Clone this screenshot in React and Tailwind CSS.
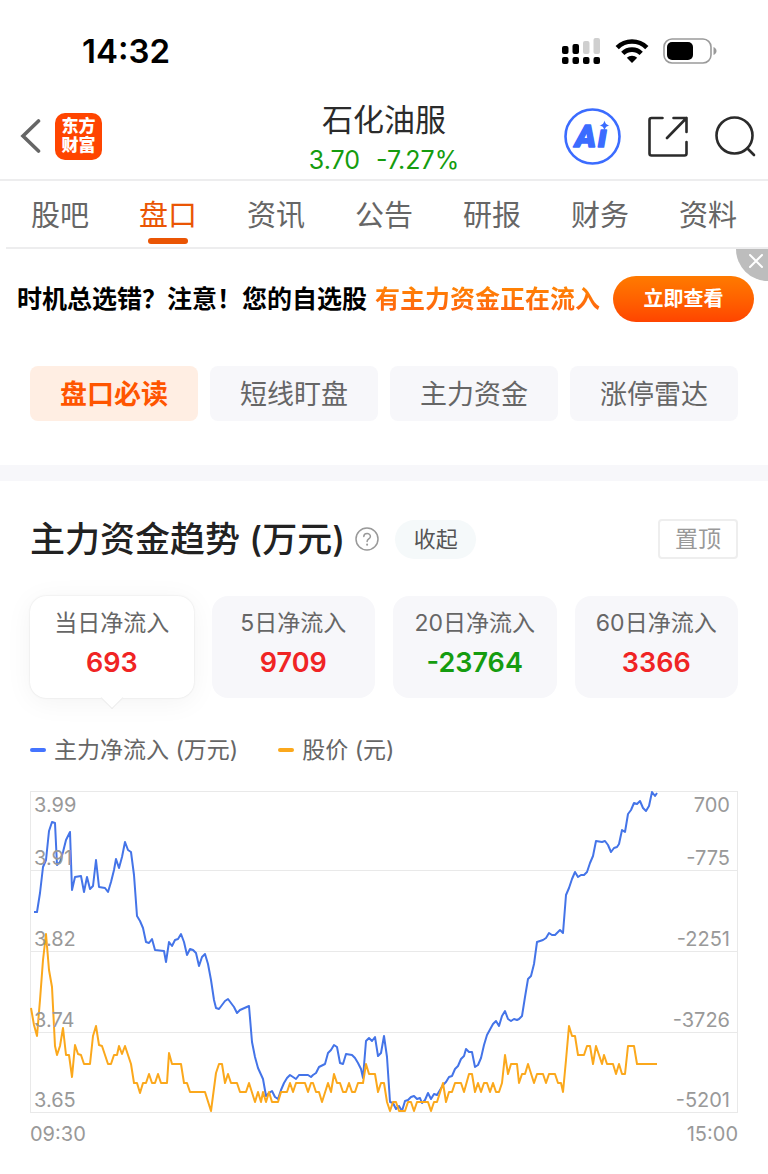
import { useState } from "react";
import clsx from "clsx";

const TABS = ["股吧", "盘口", "资讯", "公告", "研报", "财务", "资料"];

const FILTERS = ["盘口必读", "短线盯盘", "主力资金", "涨停雷达"];

const FLOWS = [
  { label: "当日净流入", value: 693 },
  { label: "5日净流入", value: 9709 },
  { label: "20日净流入", value: -23764 },
  { label: "60日净流入", value: 3366 },
];

const AXIS = [
  { y: 21, price: "3.99", flow: "700" },
  { y: 74, price: "3.91", flow: "-775" },
  { y: 155, price: "3.82", flow: "-2251" },
  { y: 236, price: "3.74", flow: "-3726" },
  { y: 316, price: "3.65", flow: "-5201" },
];

const FLOW_LINE =
  "4,121 7,121 10,102 13,76 16,69 19,40 22,31 25,32 27,74 30,71 33,61 36,49 40,41 42,99 45,86 51,85 54,101 57,86 60,98 63,95 66,69 69,96 75,97 78,101 81,91 84,79 86,68 89,77 92,66 95,51 98,59 101,61 104,84 107,125 110,130 113,137 116,151 119,152 122,148 125,159 134,160 136,171 139,151 142,155 145,149 148,148 151,143 154,151 157,164 160,158 163,159 166,162 169,175 172,166 175,163 178,173 181,189 184,209 186,217 189,218 195,210 198,208 204,216 207,222 210,219 219,215 222,251 225,266 228,277 233,288 236,305 239,302 242,300 245,306 248,308 251,299 254,292 257,287 260,284 266,288 269,284 278,284 281,286 283,284 286,282 289,276 295,273 298,262 301,259 304,254 307,256 310,272 313,273 316,263 322,264 325,267 328,272 331,278 333,287 336,250 339,247 342,250 345,246 348,265 351,262 354,245 357,266 360,311 363,312 366,318 369,315 372,320 375,310 378,309 381,306 384,305 387,308 390,307 392,312 395,309 398,302 401,308 404,303 407,304 413,294 416,291 419,286 422,285 425,278 428,275 431,268 434,265 436,258 439,261 442,261 445,276 448,274 451,267 454,254 457,244 463,233 466,230 469,235 472,225 475,220 478,228 481,230 484,228 487,229 489,228 492,225 495,206 498,188 501,185 504,173 507,151 510,150 513,149 516,147 519,142 522,144 525,144 528,141 530,139 533,142 536,104 539,97 542,88 545,81 548,86 551,84 554,84 557,81 560,72 563,65 566,50 572,51 575,50 578,54 581,61 584,57 587,56 589,53 592,39 595,41 598,23 601,19 604,12 607,13 610,10 613,17 616,20 619,15 622,1 625,5 627,2";

const PRICE_LINE =
  "1,217 4,234 7,245 10,209 13,169 16,143 19,179 22,196 25,255 27,264 30,255 33,237 36,264 39,264 42,286 45,254 48,263 51,264 54,273 60,273 63,245 66,235 69,254 72,255 78,273 81,273 84,264 87,264 89,255 92,263 95,255 101,273 104,292 107,292 110,302 113,292 116,292 119,283 122,292 125,292 128,283 131,292 137,292 139,262 142,273 151,273 154,292 157,292 160,301 175,301 181,320 186,282 189,273 192,273 195,292 198,283 201,292 207,292 210,301 216,301 219,292 225,311 228,301 231,311 233,301 236,311 239,301 242,311 248,311 251,301 257,301 260,292 263,301 266,292 275,292 278,301 281,292 283,292 286,301 289,301 292,311 298,292 301,301 304,283 307,292 310,292 313,301 316,301 319,292 322,301 325,301 328,292 333,292 336,273 339,283 345,283 348,301 351,292 354,292 357,311 360,320 363,311 366,311 369,320 375,320 378,311 381,311 384,320 387,311 398,311 401,320 404,311 407,311 413,292 416,311 419,301 422,301 425,292 431,292 434,301 439,283 442,283 445,301 448,292 451,301 454,292 457,292 460,301 463,292 466,301 469,301 472,292 475,264 478,283 481,273 487,273 489,292 492,283 495,283 498,273 504,292 507,283 513,283 516,292 519,283 525,283 528,292 531,292 533,301 536,269 539,235 542,245 545,245 548,264 554,264 557,255 560,255 563,273 566,255 572,273 574,264 577,273 583,273 586,283 589,273 592,283 595,283 598,255 604,255 607,273 627,273";

const StatusBar = () => (
  <div className="flex h-[100px] items-center justify-between pl-[82px] pr-[51px] pt-[2px]">
    <span className="text-[33px] font-semibold leading-none text-black">
      14:32
    </span>
    <div className="flex items-center gap-[14px]">
      <svg width="39" height="28" viewBox="0 0 39 28" aria-hidden="true">
        <rect x="0" y="9" width="6.500" height="8" rx="2" />
        <rect x="10.500" y="7" width="6.500" height="10" rx="2" />
        <rect x="21" y="4" width="6.500" height="13" rx="2" fill="#cfcfcf" />
        <rect x="31.500" y="1" width="6.500" height="16" rx="2" fill="#cfcfcf" />
        <rect x="0" y="20" width="6.500" height="7" rx="2" />
        <rect x="10.500" y="20" width="6.500" height="7" rx="2" />
        <rect x="21" y="20" width="6.500" height="7" rx="2" />
        <rect x="31.500" y="20" width="6.500" height="7" rx="2" />
      </svg>
      <svg width="34" height="26" viewBox="0 0 34 26" aria-hidden="true">
        <g fill="none" stroke="#000" strokeWidth="4.600">
          <path d="M2.200 9.600a21 21 0 0 1 29.600 0" />
          <path d="M7.800 15.400a13 13 0 0 1 18.400 0" />
        </g>
        <path d="M17 25l-5.200-5.200a7.400 7.400 0 0 1 10.400 0z" />
      </svg>
      <svg width="54" height="26" viewBox="0 0 54 26" aria-hidden="true">
        <rect
          x="1"
          y="1"
          width="47"
          height="24"
          rx="8"
          fill="none"
          stroke="#9a9a9a"
          strokeWidth="1.600"
        />
        <rect x="4" y="4" width="26" height="18" rx="5" />
        <path d="M50.500 9c4 1.400 4 6.600 0 8z" fill="#9a9a9a" />
      </svg>
    </div>
  </div>
);

const Header = () => (
  <header className="grid h-[81px] grid-cols-[1fr_auto_1fr] items-center border-b-2 border-[#ededee] px-3">
    <div className="flex items-center gap-[14px] pb-2 pl-2">
      <button aria-label="返回">
        <svg width="21" height="36" viewBox="0 0 21 36" fill="none">
          <path
            d="M18.500 3L3 18l15.500 15"
            stroke="#666"
            strokeWidth="3.600"
            strokeLinecap="round"
          />
        </svg>
      </button>
      <a
        href="#home"
        className="flex size-[47px] flex-col items-center justify-center rounded-[10px] bg-[#ff4500] text-[17px] font-black leading-[19px] text-white"
      >
        <span>东方</span>
        <span>财富</span>
      </a>
    </div>

    <div className="text-center">
      <h1 className="text-[31px] leading-10 text-[#2b2b2b]">石化油服</h1>
      <p className="flex justify-center gap-4 text-[25px] leading-10 text-[#159c0f]">
        <span>3.70</span>
        <span>-7.27%</span>
      </p>
    </div>

    <div className="flex items-center justify-end gap-[27px] pb-2">
      <button aria-label="Ai">
        <svg width="57" height="57" viewBox="0 0 57 57" fill="#3b6cff">
          <circle
            cx="28.500"
            cy="28.500"
            r="27"
            fill="#fff"
            stroke="#3b6cff"
            strokeWidth="2.600"
          />
          <text
            y="39"
            className="font-['Roboto'] text-[32px] font-black italic"
            stroke="#3b6cff"
            strokeWidth="1.500"
            strokeLinejoin="round"
          >
            <tspan x="11">A</tspan>
            <tspan x="34">ı</tspan>
          </text>
          <path d="M40.500 12.500c1 3.400 1.600 4 5 5-3.400 1-4 1.600-5 5-1-3.400-1.600-4-5-5 3.400-1 4-1.600 5-5z" />
        </svg>
      </button>
      <button aria-label="分享">
        <svg
          width="40"
          height="41"
          viewBox="0 0 40 41"
          fill="none"
          stroke="#2b2b2b"
          strokeWidth="2.600"
          strokeLinecap="round"
          strokeLinejoin="round"
        >
          <path d="M14.500 2H3.500Q1.500 2 1.500 4v33.500q0 2 2 2h33q2 0 2-2V26" />
          <path d="M25.500 2h13v14M38.500 2L19 22" />
        </svg>
      </button>
      <button aria-label="搜索">
        <svg
          width="41"
          height="41"
          viewBox="0 0 41 41"
          fill="none"
          stroke="#2b2b2b"
          strokeWidth="2.600"
          strokeLinecap="round"
        >
          <circle cx="19.500" cy="19.500" r="18" />
          <path d="M32.500 32.500l6.500 6.500" />
        </svg>
      </button>
    </div>
  </header>
);

const TabBar = ({ active, onChange }) => (
  <nav className="ml-[6px] grid h-[68px] grid-cols-7 border-b-2 border-[#ededee] pr-[6px]">
    {TABS.map((t) => (
      <button
        key={t}
        onClick={() => onChange(t)}
        className={clsx(
          "flex flex-col items-center text-[29px] leading-[58px]",
          t === active ? "text-[#ea5504]" : "text-[#666]"
        )}
      >
        <span className="h-[57px] pt-[6px]">{t}</span>
        {t === active && (
          <span className="h-[6px] w-10 rounded-full bg-[#ea5504]" />
        )}
      </button>
    ))}
  </nav>
);

const Banner = () => (
  <section className="relative flex h-[99px] items-center justify-between pl-[17px] pr-[14px]">
    <p className="flex gap-2 whitespace-nowrap text-[25px] font-bold leading-9 text-black">
      <span>时机总选错？注意！您的自选股</span>
      <span className="bg-linear-to-b from-[#ff8a00] to-[#ff5a10] bg-clip-text text-transparent">
        有主力资金正在流入
      </span>
    </p>
    <button className="h-[46px] w-[141px] rounded-full bg-linear-to-b from-[#ff7a00] to-[#ff4400] text-xl font-bold text-white">
      立即查看
    </button>
    <button
      aria-label="关闭"
      className="absolute right-0 top-0 h-8 w-8 rounded-bl-full bg-[#bdbdbd]"
    >
      <svg
        viewBox="0 0 32 32"
        className="size-8"
        stroke="#fff"
        strokeWidth="2"
        strokeLinecap="round"
      >
        <path d="M14 6l12 12M26 6L14 18" />
      </svg>
    </button>
  </section>
);

const Filters = ({ active, onChange }) => (
  <div className="grid grid-cols-4 gap-3 px-[30px] pb-11 pt-[18px]">
    {FILTERS.map((f) => (
      <button
        key={f}
        onClick={() => onChange(f)}
        className={clsx(
          "h-[55px] rounded-lg pt-1 text-[27px]",
          f === active
            ? "bg-[#ffeee3] font-bold text-[#ff5500]"
            : "bg-[#f7f7fa] text-[#666]"
        )}
      >
        {f}
      </button>
    ))}
  </div>
);

const FlowCard = ({ label, value, active, onClick }) => (
  <button
    onClick={onClick}
    className={clsx(
      "relative flex h-[102px] flex-col items-center rounded-2xl pt-[9px]",
      active
        ? "bg-white shadow-[0_0_2px_rgba(0,0,0,0.12),0_4px_28px_rgba(0,0,0,0.05)]"
        : "bg-[#f7f7fa]"
    )}
  >
    <span className="text-[23px] leading-9 text-[#666]">{label}</span>
    <span
      className={clsx(
        "text-[27px] font-semibold leading-[44px]",
        value < 0 ? "text-[#159c0f]" : "text-[#f02424]"
      )}
    >
      {value}
    </span>
    {active && (
      <span className="absolute -bottom-2 size-4 rotate-45 border-b border-r border-[#ececec] bg-white" />
    )}
  </button>
);

const TrendChart = () => (
  <svg
    viewBox="0 0 708 356"
    className="mt-[21px] w-full"
    role="img"
    aria-label="主力净流入与股价走势"
  >
    <g fill="none" stroke="#e9e9e9" strokeWidth="1">
      <rect x="0.500" y="0.500" width="707" height="321" />
      <path d="M0 79.500H708M0 160.500H708M0 241.500H708" />
    </g>
    <g fill="none" strokeWidth="2" strokeLinejoin="round">
      <polyline points={FLOW_LINE} stroke="#4474e8" />
      <polyline points={PRICE_LINE} stroke="#fba81c" />
    </g>
    <g fill="#999" fontSize="20">
      {AXIS.map((a) => (
        <g key={a.price}>
          <text x="4" y={a.y}>
            {a.price}
          </text>
          <text x="700" y={a.y} textAnchor="end">
            {a.flow}
          </text>
        </g>
      ))}
      <text x="0" y="350">
        09:30
      </text>
      <text x="708" y="350" textAnchor="end">
        15:00
      </text>
    </g>
  </svg>
);

const FlowTrend = () => {
  const [range, setRange] = useState(0);

  return (
    <section className="px-[30px] pt-[38px]">
      <div className="flex h-10 items-center">
        <h2 className="text-[35px] font-medium text-[#222]">
          主力资金趋势 (万元)
        </h2>
        <button aria-label="说明" className="ml-[10px]">
          <svg
            width="24"
            height="24"
            viewBox="0 0 24 24"
            fill="none"
            stroke="#999"
            strokeWidth="1.500"
            strokeLinecap="round"
          >
            <circle cx="12" cy="12" r="11" />
            <path d="M8.800 9.600c0-4 6.600-4 6.600-.2 0 2.500-3.300 2.600-3.300 5" />
            <path d="M12.100 17.600v.2" strokeWidth="2" />
          </svg>
        </button>
        <button className="ml-4 h-[39px] w-[81px] rounded-full bg-[#f5f9fa] text-[22px] text-[#555]">
          收起
        </button>
        <button className="ml-auto h-10 w-20 rounded border-2 border-[#eee] text-[23px] text-[#999]">
          置顶
        </button>
      </div>

      <div className="mt-[37px] grid grid-cols-4 gap-[18px]">
        {FLOWS.map((f, i) => (
          <FlowCard
            key={f.label}
            {...f}
            active={i === range}
            onClick={() => setRange(i)}
          />
        ))}
      </div>

      <div className="mt-8 flex gap-10 text-[23px] leading-10 text-[#666]">
        <span className="flex items-center gap-2">
          <i className="h-1 w-4 rounded-full bg-[#4474ff]" />
          主力净流入 (万元)
        </span>
        <span className="flex items-center gap-2">
          <i className="h-1 w-4 rounded-full bg-[#fba81c]" />
          股价 (元)
        </span>
      </div>

      <TrendChart />
    </section>
  );
};

export default function App() {
  const [tab, setTab] = useState("盘口");
  const [filter, setFilter] = useState("盘口必读");

  return (
    <div className="min-h-screen bg-white font-['Inter','Noto_Sans_CJK_SC',sans-serif]">
      <StatusBar />
      <Header />
      <TabBar active={tab} onChange={setTab} />
      <Banner />
      <Filters active={filter} onChange={setFilter} />
      <div className="h-4 bg-[#f7f7fa]" />
      <FlowTrend />
    </div>
  );
}
